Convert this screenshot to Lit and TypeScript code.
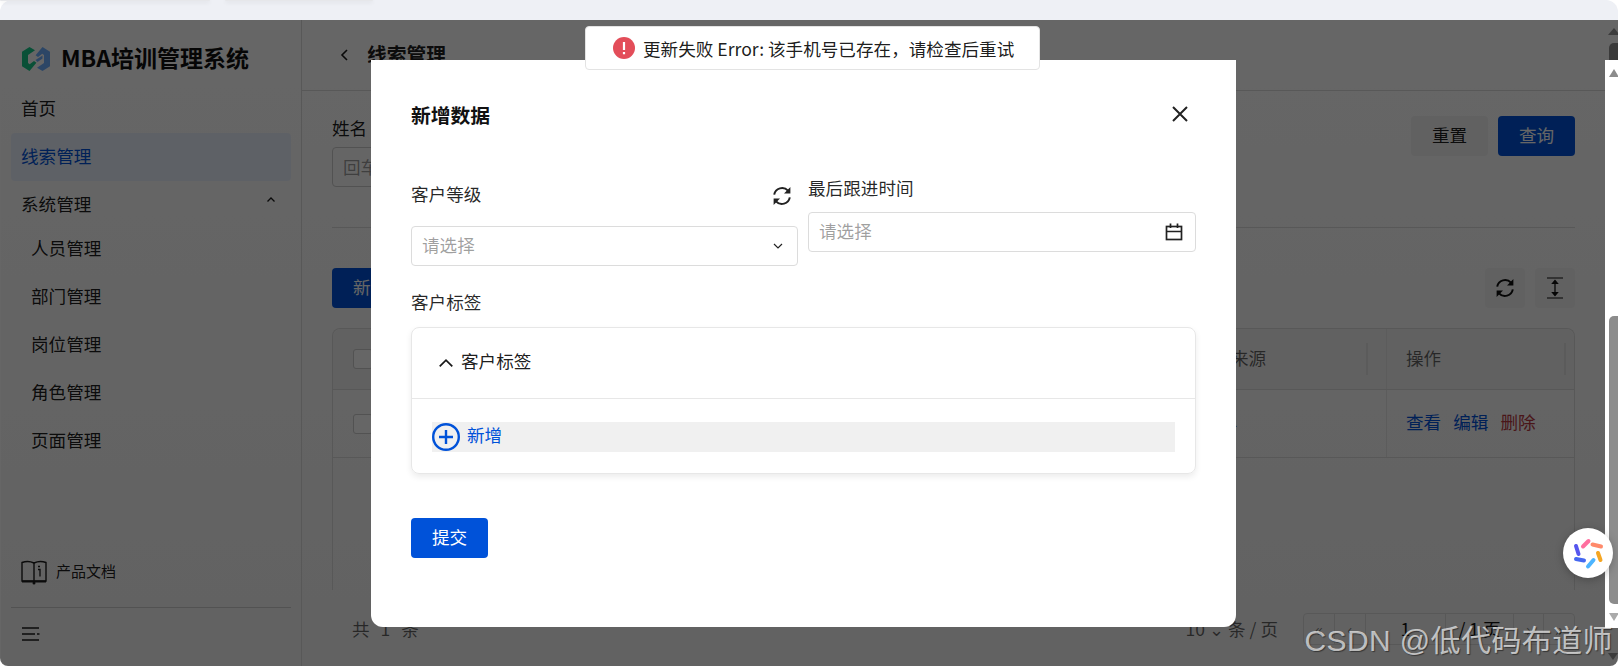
import { LitElement, html, css, svg } from "lit";
import { customElement } from "lit/decorators.js";

const refreshIcon = (size: number) => html`<svg width=${size} height=${size} viewBox="0 0 20 20" fill="none" stroke="currentColor" stroke-width="2">
  <path d="M2.200 8.600A8 8 0 0 1 16 4.700" /><path d="M17.800 11.400A8 8 0 0 1 4 15.300" />
  <path d="M18.400 1V7.400H12Z" fill="currentColor" stroke="none" /><path d="M1.600 19V12.600H8Z" fill="currentColor" stroke="none" />
</svg>`;

const chevron = (d: string, w = 14, h = 14, sw = 1.6) => html`<svg width=${w} height=${h} viewBox="0 0 14 14" fill="none" stroke="currentColor" stroke-width=${sw}>${svg`<path d=${d} />`}</svg>`;

@customElement("app-root")
export class AppRoot extends LitElement {
  static styles = css`
    :host { display: block; width: 1618px; height: 670px; position: relative; overflow: hidden; background: #fff;
      font-family: "Noto Sans CJK SC", "Liberation Sans", sans-serif; font-size: 17.6px; color: rgba(0,0,0,.9); }
    * { box-sizing: border-box; }
    .tx { padding-bottom: 4px; }
    .tabs { height: 20px; background: #eef0f5; border-radius: 12px 12px 0 0; display: flex; gap: 15px; }
    .tab { height: 1px; background: #e6e7ea; box-shadow: 0 1px 4px rgba(0,0,0,.16); border-radius: 0 0 8px 8px; }
    .t1 { width: 210px; } .t2 { width: 148px; }
    .page { height: 646px; margin-left: 1px; display: flex; background: linear-gradient(#fff, #f5f5f5); border-radius: 0 0 8px 8px; overflow: hidden; }
    .side { width: 301px; flex: none; border-right: 1px solid #ddd; padding: 0 10px; display: flex; flex-direction: column; }
    .brand { height: 65px; padding: 12px 11px 0; display: flex; align-items: center; gap: 11px; font-size: 23px; font-weight: 700; color: #111; white-space: nowrap; }
    .item { height: 48px; line-height: 46px; padding-left: 10px; border-radius: 4px; display: flex; justify-content: space-between; }
    .item.active { background: #ecf2fe; color: #0052d9; }
    .item svg { margin: 12px 13px 0 0; }
    .subs { margin-top: -4px; }
    .sub { padding-left: 20px; }
    .doc { margin-top: auto; display: flex; align-items: center; gap: 9px; font-size: 15px; height: 34px; padding-left: 10px; margin-bottom: 18px; }
    .foot { border-top: 1px solid #ccc; height: 59px; padding: 19px 0 0 11px; }
    .foot svg { display: block; }
    .main { flex: 1; min-width: 0; display: flex; flex-direction: column; }
    .head { height: 71px; flex: none; border-bottom: 1px solid #ddd; display: flex; align-items: center; padding: 0 0 0 36px; gap: 15px; font-size: 19.8px; font-weight: 700; }
    .content { padding: 0 43px 0 30px; }
    .filter { height: 137px; padding-top: 25px; border-bottom: 1px solid #ddd; display: flex; justify-content: space-between; align-items: flex-start; }
    .flabel { line-height: 24px; margin-bottom: 7px; }
    .finput { width: 260px; height: 40px; border: 1px solid #ccc; border-radius: 4px; padding-left: 10px; line-height: 38px; color: rgba(0,0,0,.4); }
    .btns { display: flex; gap: 10px; }
    .btn { width: 77px; height: 40px; border-radius: 4px; display: flex; align-items: center; justify-content: center; background: #f3f3f3; padding-bottom: 4px; }
    .btn.primary { background: #0052d9; color: #fff; border: none; }
    .toolbar { margin-top: 40px; display: flex; justify-content: space-between; gap: 10px; }
    .tools { display: flex; gap: 10px; }
    .iconbtn { width: 40px; height: 40px; border-radius: 4px; background: #f3f3f3; display: flex; align-items: center; justify-content: center; color: #111; }
    .table { margin-top: 20px; height: 262px; border: 1px solid #ddd; border-bottom: none; border-radius: 8px 8px 0 0; }
    .tr { display: grid; grid-template-columns: 60px 1fr 175px 188px; border-bottom: 1px solid #ddd; }
    .tr.h { height: 61px; background: #f3f3f3; color: rgba(0,0,0,.6); border-radius: 8px 8px 0 0; }
    .tr.b { height: 68px; }
    .td { display: flex; align-items: center; padding-left: 20px; }
    .td.last { padding-left: 19px; }
    .tr.b .last { padding-bottom: 4px; }
    .h .td > span { flex: 1; height: 32px; line-height: 30px; border-right: 2px solid #e4e4e4; margin-right: 8px; }
    .h .td.src > span { margin-right: 18px; }
    .last { border-left: 1px solid #e6e6e6; gap: 12px; }
    .h .last { gap: 0; }
    .cb { width: 20px; height: 20px; border: 1px solid #ccc; border-radius: 3px; background: #fff; }
    .link { color: #0052d9; } .del { color: #b9383f; }
    .pager-row { display: flex; align-items: flex-start; padding: 23px 0 0 20px; height: 76px; color: rgba(0,0,0,.6); }
    .total { line-height: 32px; word-spacing: 7px; }
    .psize { margin-left: auto; display: flex; line-height: 32px; margin-right: 25px; gap: 4px; align-items: center; }
    .pager { width: 272px; height: 32px; border: 1px solid #ddd; border-radius: 4px; display: grid; grid-template-columns: 31px 31px 80px 68px 30px 1fr; line-height: 30px; text-align: center; }
    .pager span { border-right: 1px solid #ddd; color: rgba(0,0,0,.5); }
    .pager span.n { color: #111; } .pager span:last-child { border: none; }

    .mask { position: absolute; left: 0; right: 0; top: 20px; height: 646px; background: rgba(0,0,0,.6); border-radius: 0 0 8px 8px; }
    .rail { position: absolute; left: 1605px; top: 60px; width: 13px; height: 568px; background: #fff; }
    .thumb { position: absolute; left: 4px; top: 256px; width: 9px; height: 288px; border-radius: 5px 0 0 5px; background: #8c8c8c; }
    .tri { position: absolute; left: 4px; width: 0; height: 0; border-left: 5px solid transparent; border-right: 5px solid transparent; }
    .tri.up { top: 9px; border-bottom: 8px solid #8c8c8c; }
    .tri.down { top: 553px; border-top: 8px solid #aaa; }
    .dup { position: absolute; left: 1608px; top: 28px; width: 0; height: 0; border-left: 6px solid transparent; border-right: 6px solid transparent; border-bottom: 7px solid #3c3c3c; }
    .dthumb { position: absolute; left: 1609px; top: 43px; width: 9px; height: 17px; background: #3a3a3a; border-radius: 5px 0 0 0; }
    .ddown { position: absolute; left: 1608px; top: 653px; width: 0; height: 0; border-left: 5px solid transparent; border-right: 5px solid transparent; border-top: 7px solid #3c3c3c; }

    .modal { position: absolute; left: 371px; top: 60px; width: 865px; height: 567px; background: #fff; border-radius: 0 0 12px 12px; padding: 40px 40px 0; color: rgba(0,0,0,.9); }
    .mhead { height: 32px; display: flex; justify-content: space-between; align-items: center; font-size: 19.8px; font-weight: 700; color: #111; margin-bottom: 44px; }
    .mhead svg { margin: 0 7px 4px 0; color: #222; }
    .grid { display: grid; grid-template-columns: 387px 388px; gap: 10px; }
    .lrow { display: flex; justify-content: space-between; align-items: center; height: 26px; margin: 7px 0 17px; padding: 0 6px 1px 0; color: rgba(0,0,0,.85); }
    .lrow svg { color: #222; }
    .lrow2 { height: 26px; margin-bottom: 10px; line-height: 24px; color: rgba(0,0,0,.85); }
    .field { height: 40px; border: 1px solid #dcdcdc; border-radius: 4px; padding: 0 12px 0 10px; display: flex; justify-content: space-between; align-items: center; color: rgba(0,0,0,.38); }
    .field svg { color: #222; }
    .lab3 { margin-top: 25px; line-height: 22px; height: 26px; margin-bottom: 10px; color: rgba(0,0,0,.85); }
    .card { height: 147px; border: 1px solid #e7e7e7; border-radius: 8px; box-shadow: 0 3px 6px rgba(0,0,0,.08); }
    .chead { height: 71px; border-bottom: 1px solid #e7e7e7; display: flex; align-items: center; padding-left: 26px; gap: 7px; }
    .chead .tx { padding-bottom: 6px; }
    .row { margin: 23px 20px 0; height: 30px; background: #f0f0f0; display: flex; align-items: center; gap: 7px; color: #0052d9; }
    .row svg { flex: none; }
    .row .tx { padding-bottom: 6px; }
    .submit { margin-top: 44px; }

    .toast { position: absolute; left: 585px; top: 26px; width: 455px; height: 44px; background: #fff; border: 1px solid #e3e3e3; border-radius: 4px; display: flex; align-items: center; padding-left: 27px; gap: 8px; color: rgba(0,0,0,.9); white-space: nowrap; }
    .fab { position: absolute; left: 1563px; top: 528px; width: 50px; height: 50px; border-radius: 50%; background: #fff; box-shadow: 0 2px 8px rgba(0,0,0,.25); }
    .mark { position: absolute; right: 5px; top: 621px; line-height: 40px; font-size: 30px; letter-spacing: .4px; font-family: "Liberation Sans", "Noto Sans CJK SC", sans-serif; color: rgba(255,255,255,.68); text-shadow: 1px 1px 1px rgba(0,0,0,.45); white-space: nowrap; }
  `;

  render() {
    return html`
      <div class="tabs"><div class="tab t1"></div><div class="tab t2"></div></div>
      <div class="page">
        <aside class="side">
          <div class="brand">
            <svg width="28" height="24" viewBox="0 0 28 24">
              <path fill="#17c98a" d="M7.500 0 13 3.200 6 8v8l1.700 1.200L12 14l2.400 1.800L7.500 24 0 19.200V4.800Z"/>
              <path fill="#6fb0ff" d="M20.500 0 28 4.800v14.400L20.500 24 15 20.800l7-4.800V8l-1.700-1.200L16 10l-2.400-1.800Z"/>
              <path fill="#6fb0ff" d="M13.500 13 20.500 8.500v3L15.500 15Z"/>
            </svg>
            <span class="tx">MBA培训管理系统</span>
          </div>
          <div class="item">首页</div>
          <div class="item active">线索管理</div>
          <div class="item">系统管理 ${chevron("M3.500 8.500 7 5l3.500 3.500", 14, 14, 1.3)}</div>
          <div class="subs">
            <div class="item sub">人员管理</div>
            <div class="item sub">部门管理</div>
            <div class="item sub">岗位管理</div>
            <div class="item sub">角色管理</div>
            <div class="item sub">页面管理</div>
          </div>
          <div class="doc">
            <svg width="26" height="25" viewBox="0 0 26 25" fill="none" stroke="#1c1c1c" stroke-width="1.400">
              <path d="M1 2.500C5 1 9 1 13 3c4-2 8-2 12-.5V21H1Z"/><path d="M13 3v18"/><path d="M17 9.500h2v7M17 6.500h2" stroke-width="1.300"/>
              <path d="M1 21.500h24" stroke-width="2"/><circle cx="13" cy="23" r="1.500" fill="#1c1c1c" stroke="none"/>
            </svg>
            <span class="tx">产品文档</span>
          </div>
          <div class="foot">
            <svg width="18" height="14" viewBox="0 0 18 14" fill="none" stroke="#1c1c1c" stroke-width="1.500">
              <path d="M0 1h17M0 7h13M0 13h17"/><path d="M15 7h2.500"/>
            </svg>
          </div>
        </aside>
        <main class="main">
          <header class="head">${chevron("M9 2 4 7l5 5")} <span class="tx">线索管理</span></header>
          <div class="content">
            <section class="filter">
              <div><div class="flabel">姓名</div><div class="finput">回车查询</div></div>
              <div class="btns"><div class="btn">重置</div><div class="btn primary">查询</div></div>
            </section>
            <section class="toolbar">
              <div class="btn primary">新增</div>
              <div class="tools">
                <div class="iconbtn">${refreshIcon(20)}</div>
                <div class="iconbtn">
                  <svg width="18" height="22" viewBox="0 0 18 22" fill="none" stroke="#111" stroke-width="1.200">
                    <path d="M1 1h16M1 21h16"/><path d="M9 4v14" stroke-width="1.300"/>
                    <path d="M6.500 6.500 9 3.500l2.500 3ZM6.500 15.500 9 18.500l2.500-3Z" fill="#111"/>
                  </svg>
                </div>
              </div>
            </section>
            <section class="table">
              <div class="tr h">
                <div class="td"><div class="cb"></div></div>
                <div class="td"><span>姓名</span></div>
                <div class="td src"><span>来源</span></div>
                <div class="td last"><span>操作</span></div>
              </div>
              <div class="tr b">
                <div class="td"><div class="cb"></div></div>
                <div class="td"></div>
                <div class="td">-</div>
                <div class="td last"><span class="link">查看</span><span class="link">编辑</span><span class="del">删除</span></div>
              </div>
            </section>
            <section class="pager-row">
              <div class="total">共 1 条</div>
              <div class="psize"><span>10 ⌄</span><span>条 / 页</span></div>
              <div class="pager"><span>«</span><span>‹</span><span class="n">1</span><span class="n">/ 1 页</span><span>›</span><span>»</span></div>
            </section>
          </div>
        </main>
      </div>

      <div class="mask"></div>
      <div class="dup"></div><div class="dthumb"></div><div class="ddown"></div>
      <div class="rail"><div class="tri up"></div><div class="thumb"></div><div class="tri down"></div></div>

      <section class="modal">
        <div class="mhead"><span class="tx">新增数据</span>
          <svg width="18" height="18" viewBox="0 0 18 18" fill="none" stroke="currentColor" stroke-width="2"><path d="M2 2l14 14M16 2 2 16"/></svg>
        </div>
        <div class="grid">
          <div>
            <div class="lrow"><span class="tx">客户等级</span> ${refreshIcon(20)}</div>
            <div class="field"><span class="tx">请选择</span> ${chevron("M3 5 7 9l4-4", 14, 14, 1.200)}</div>
          </div>
          <div>
            <div class="lrow2">最后跟进时间</div>
            <div class="field"><span class="tx">请选择</span>
              <svg width="18" height="18" viewBox="0 0 18 18" fill="none" stroke="currentColor" stroke-width="1.700"><rect x="1.500" y="3.500" width="15" height="13"/><path d="M1.500 8.500h15M5.500 0.500v4.500M12.500 0.500v4.500"/></svg>
            </div>
          </div>
        </div>
        <div class="lab3">客户标签</div>
        <div class="card">
          <div class="chead">${chevron("M1.500 10 7 4.500 12.500 10", 16, 16, 1.500)} <span class="tx">客户标签</span></div>
          <div class="row">
            <svg width="28" height="28" viewBox="0 0 28 28" fill="none" stroke="#0052d9" stroke-width="2.400"><circle cx="14" cy="14" r="12.800"/><path d="M14 7v14M7 14h14"/></svg>
            <span class="tx">新增</span>
          </div>
        </div>
        <div class="btn primary submit">提交</div>
      </section>

      <div class="toast">
        <svg width="22" height="22" viewBox="0 0 22 22"><circle cx="11" cy="11" r="11" fill="#e34d59"/><path d="M11 5v8M11 15v2.200" stroke="#fff" stroke-width="2.200" fill="none"/></svg>
        更新失败 Error: 该手机号已存在，请检查后重试
      </div>

      <div class="fab">
        <svg width="50" height="50" viewBox="0 0 50 50" fill="none" stroke-width="4" stroke-linecap="round">
          <path d="M20 18.500 25.500 13" stroke="#ff6f9f"/><path d="M29.500 16.500 38 18.500" stroke="#ff8a6b"/>
          <path d="M35 25 37.500 32" stroke="#f5a623"/><path d="M25 38.500 30.500 32" stroke="#4db5ff"/>
          <path d="M13 31 21 32.500" stroke="#4568f0"/><path d="M13 18 15.500 26" stroke="#5656ee"/>
        </svg>
      </div>
      <div class="mark">CSDN @低代码布道师</div>
    `;
  }
}
